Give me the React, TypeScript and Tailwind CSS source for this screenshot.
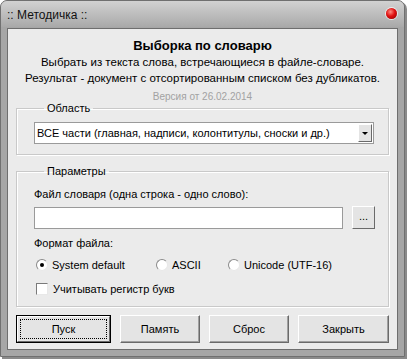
import React from "react";

const font = { fontFamily: '"Liberation Sans", Arial, sans-serif' };

function Btn({ children, focus, className = "" }: { children: React.ReactNode; focus?: boolean; className?: string }) {
  if (focus) {
    return (
      <div className={"h-[28px] border border-black bg-[#e4e4e4] " + className}>
        <div className="h-full border-t border-l border-white border-b border-r border-b-[#6a6a6a] border-r-[#6a6a6a] p-[2px]">
          <div className="h-full border border-dotted border-black flex items-center justify-center text-[11px] text-black">
            {children}
          </div>
        </div>
      </div>
    );
  }
  return (
    <div
      className={
        "h-[28px] bg-[#e4e4e4] border border-t-white border-l-white border-b-[#6a6a6a] border-r-[#6a6a6a] shadow-[inset_-1px_-1px_0_#a0a0a0] flex items-center justify-center text-[11px] text-black " +
        className
      }
    >
      {children}
    </div>
  );
}

function Radio({ checked, label, className = "" }: { checked?: boolean; label: string; className?: string }) {
  return (
    <div className={"flex items-center " + className}>
      <div className="w-[12px] h-[12px] rounded-full bg-white border border-t-[#8a8a8a] border-l-[#8a8a8a] border-b-[#e8e8e8] border-r-[#e8e8e8] flex items-center justify-center">
        {checked && <div className="w-[4px] h-[4px] rounded-full bg-black" />}
      </div>
      <span className="ml-[4px] text-[11px] leading-[14px]">{label}</span>
    </div>
  );
}

export default function App() {
  return (
    <div className="w-[407px] h-[360px] bg-white overflow-hidden" style={font}>
      <div className="w-[405px] h-[357px] rounded-t-[7px] bg-[#a6a6a6] border border-[#707070] shadow-[2px_2px_0_#8a8a8a] flex flex-col">
        <div className="h-[26px] rounded-t-[6px] bg-gradient-to-b from-[#d2d2d2] to-[#a9a9a9] flex items-center justify-between pl-[6px] pr-[7px] pt-[2px]">
          <span className="text-[12px] text-[#111] leading-none">:: Методичка ::</span>
          <div className="w-[11px] h-[11px] rounded-full bg-[radial-gradient(circle_at_40%_35%,#ff8a80_0%,#e01010_45%,#8a0000_100%)] shadow-[0_0_0_1px_#ffffffaa] -mt-[3px]" />
        </div>
        <div className="mx-[6px] mt-[1px] mb-[6px] flex-1 bg-[#ebebeb] border border-[#6e6e6e] flex flex-col text-black">
          <div className="pt-[9px] flex flex-col items-center">
            <div className="text-[13px] font-bold leading-[16px]">Выборка по словарю</div>
            <div className="text-[11.5px] leading-[16px]">Выбрать из текста слова, встречающиеся в файле-словаре.</div>
            <div className="text-[11.5px] leading-[16px]">Результат - документ с отсортированным списком без дубликатов.</div>
            <div className="text-[10px] leading-[12px] text-[#a2a2a2] mt-[5px]">Версия от 26.02.2014</div>
          </div>

          <fieldset className="mx-[8px] mt-0 border border-[#c9c9c9] shadow-[inset_1px_1px_0_#ffffff,1px_1px_0_#ffffff] px-[17px] pb-[10px] pr-[14px]">
            <legend className="ml-[10px] px-[3px] text-[11px] leading-[10px]">Область</legend>
            <div className="mt-[9px] h-[22px] bg-white border border-[#9a9a9a] flex items-center pr-[1px]">
              <span className="flex-1 pl-[2px] text-[11px] leading-[14px]">ВСЕ части (главная, надписи, колонтитулы, сноски и др.)</span>
              <div className="w-[14px] h-[18px] bg-[#e4e4e4] border border-t-white border-l-white border-b-[#6a6a6a] border-r-[#6a6a6a] flex items-center justify-center">
                <div className="w-0 h-0 border-l-[3px] border-r-[3px] border-t-[3px] border-l-transparent border-r-transparent border-t-black" />
              </div>
            </div>
          </fieldset>

          <fieldset className="mx-[8px] mt-[11px] border border-[#c9c9c9] shadow-[inset_1px_1px_0_#ffffff,1px_1px_0_#ffffff] pl-[17px] pr-[13px] pb-[10px]">
            <legend className="ml-[10px] px-[3px] text-[11px] leading-[10px]">Параметры</legend>
            <div className="mt-[11px] text-[11px] leading-[14px]">Файл словаря (одна строка - одно слово):</div>
            <div className="mt-[5px] flex items-center gap-[9px]">
              <div className="flex-1 h-[22px] bg-white border border-[#9a9a9a]" />
              <div className="w-[23px] h-[23px] bg-[#e4e4e4] border border-t-white border-l-white border-b-[#6a6a6a] border-r-[#6a6a6a] flex items-center justify-center text-[11px] leading-none pb-[2px]">
                ...
              </div>
            </div>
            <div className="mt-[7px] text-[11px] leading-[14px]">Формат файла:</div>
            <div className="mt-[8px] flex items-center pl-[2px]">
              <Radio checked label="System default" className="w-[120px]" />
              <Radio label="ASCII" className="w-[72px]" />
              <Radio label="Unicode (UTF-16)" />
            </div>
            <div className="mt-[10px] flex items-center pl-[2px]">
              <div className="w-[12px] h-[12px] bg-white border border-t-[#7a7a7a] border-l-[#7a7a7a] border-b-[#e8e8e8] border-r-[#e8e8e8]" />
              <span className="ml-[5px] text-[11px] leading-[14px]">Учитывать регистр букв</span>
            </div>
          </fieldset>

          <div className="mx-[8px] mt-[8px] flex gap-[9px]">
            <Btn focus className="w-[95px]">Пуск</Btn>
            <Btn className="w-[80px]">Память</Btn>
            <Btn className="w-[80px]">Сброс</Btn>
            <Btn className="flex-1">Закрыть</Btn>
          </div>
        </div>
      </div>
    </div>
  );
}
